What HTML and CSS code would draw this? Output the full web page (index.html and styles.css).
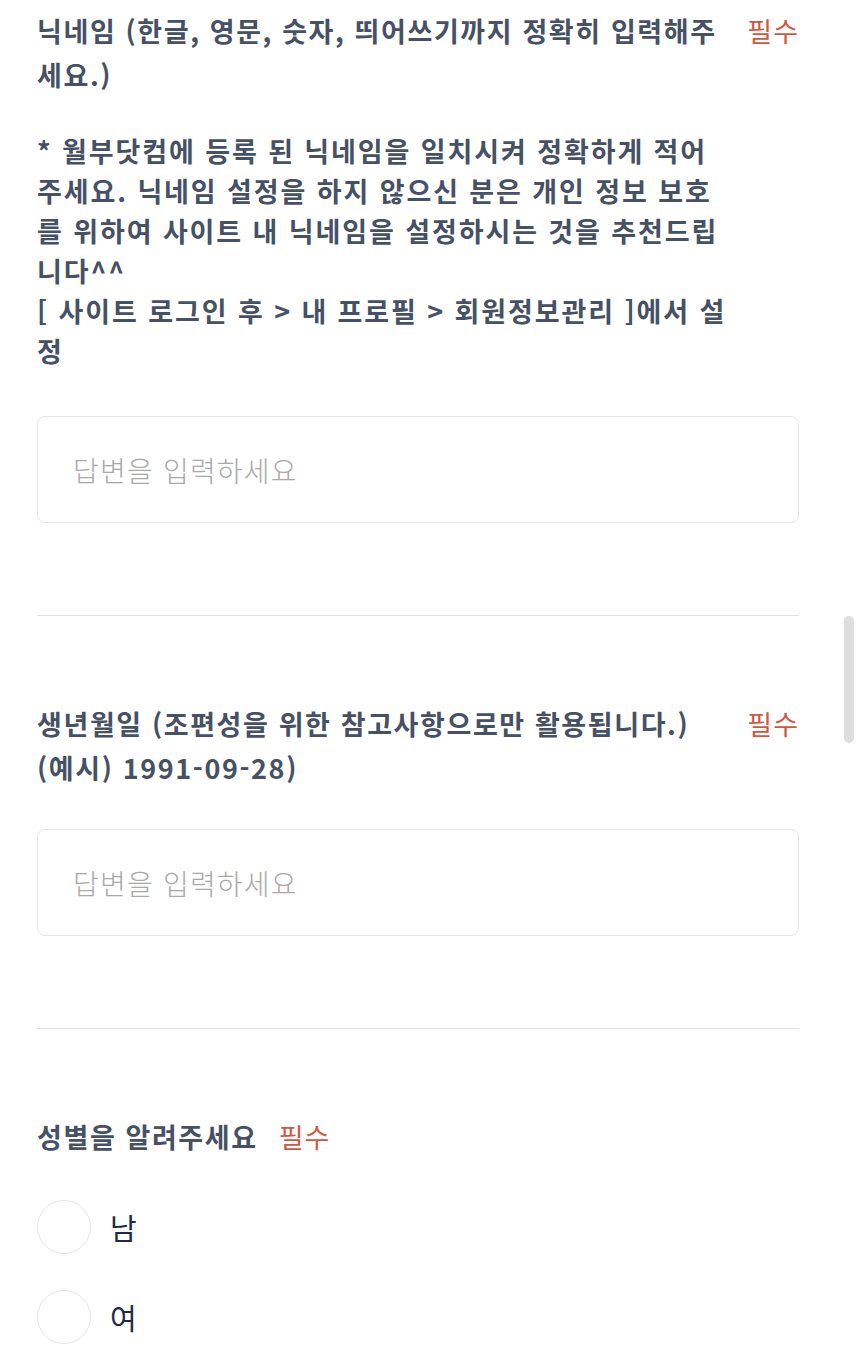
FILE: index.html
```html
<!DOCTYPE html>
<html lang="ko">
<head>
    <meta charset="UTF-8">
    <meta name="viewport" content="width=device-width, initial-scale=1.0">
    <title>신청서</title>
    <link rel="stylesheet" href="styles.css">
</head>
<body>

    <div class="formulario">
        <!-- 닉네임 -->
        <div class="pregunta primera">
            <div class="encabezado">
                <div class="titulo">
                    <p>닉네임 (한글, 영문, 숫자, 띄어쓰기까지 정확히 입력해주세요.)</p>
                    <p class="descripcion">* 월부닷컴에 등록 된 닉네임을 일치시켜 정확하게 적어주세요. 닉네임 설정을 하지 않으신 분은 개인 정보 보호를 위하여 사이트 내 닉네임을 설정하시는 것을 추천드립니다^^<br>[ 사이트 로그인 후 &gt; 내 프로필 &gt; 회원정보관리 ]에서 설정</p>
                </div>
                <span class="requerido">필수</span>
            </div>
            <input class="respuesta respuesta-lejos" type="text" placeholder="답변을 입력하세요">
        </div>

        <!-- 생년월일 -->
        <div class="pregunta">
            <div class="encabezado">
                <div class="titulo">
                    <p>생년월일 (조편성을 위한 참고사항으로만 활용됩니다.) (예시) 1991-09-28)</p>
                </div>
                <span class="requerido">필수</span>
            </div>
            <input class="respuesta" type="text" placeholder="답변을 입력하세요">
        </div>

        <!-- 성별 -->
        <div class="pregunta ultima">
            <div class="encabezado">
                <div class="titulo">
                    <p>성별을 알려주세요</p>
                </div>
                <span class="requerido">필수</span>
            </div>
            <div class="opciones">
                <label class="opcion"><span class="circulo"></span>남</label>
                <label class="opcion"><span class="circulo"></span>여</label>
            </div>
        </div>
    </div>

    <div class="barra-scroll"></div>

</body>
</html>
```

FILE: styles.css
```css
/* Estilos generales */
body {
    margin: 0;
    padding: 0;
    background-color: #fff;
    font-family: "Noto Sans CJK KR", "Noto Sans", sans-serif;
    color: #465166;
}

.formulario {
    padding: 0 65px 0 37px;
}

/* Cada pregunta */
.pregunta {
    padding: 86px 0 92px;
    border-bottom: 1px solid #e3e3e3;
}

.pregunta.primera {
    padding-top: 9px;
}

.pregunta.ultima {
    border-bottom: none;
    padding-bottom: 40px;
}

.encabezado {
    display: flex;
    align-items: flex-start;
}

.titulo {
    font-size: 27px;
    font-weight: 700;
    line-height: 44px;
    letter-spacing: 1.6px;
}

.titulo p {
    margin: 0;
}

.titulo .descripcion {
    margin-top: 34px;
    line-height: 40px;
    letter-spacing: 1.9px;
}

.requerido {
    flex-shrink: 0;
    margin-left: 21px;
    font-size: 27px;
    line-height: 44px;
    letter-spacing: 1px;
    color: #cf5843;
}

/* Campo de respuesta */
.respuesta {
    display: block;
    box-sizing: border-box;
    width: 100%;
    height: 107px;
    margin-top: 39px;
    padding: 0 35px;
    border: 1px solid #e6e6e6;
    border-radius: 8px;
    font-family: inherit;
    font-size: 28px;
    font-weight: 300;
    letter-spacing: 1.2px;
    color: #1e2a46;
    outline: none;
}

.respuesta-lejos {
    margin-top: 45px;
}

.respuesta::placeholder {
    color: #a9a9a9;
}

/* Opciones de radio */
.opciones {
    margin-top: 41px;
    display: flex;
    flex-direction: column;
    gap: 36px;
}

.opcion {
    display: flex;
    align-items: center;
    font-size: 29px;
    color: #1e2a46;
}

.circulo {
    width: 52px;
    height: 52px;
    border: 1px solid #e6e6e6;
    border-radius: 50%;
    margin-right: 19px;
}

/* Barra de desplazamiento */
.barra-scroll {
    position: fixed;
    top: 616px;
    right: 10px;
    width: 10px;
    height: 127px;
    border-radius: 5px;
    background-color: #dedede;
}
```
